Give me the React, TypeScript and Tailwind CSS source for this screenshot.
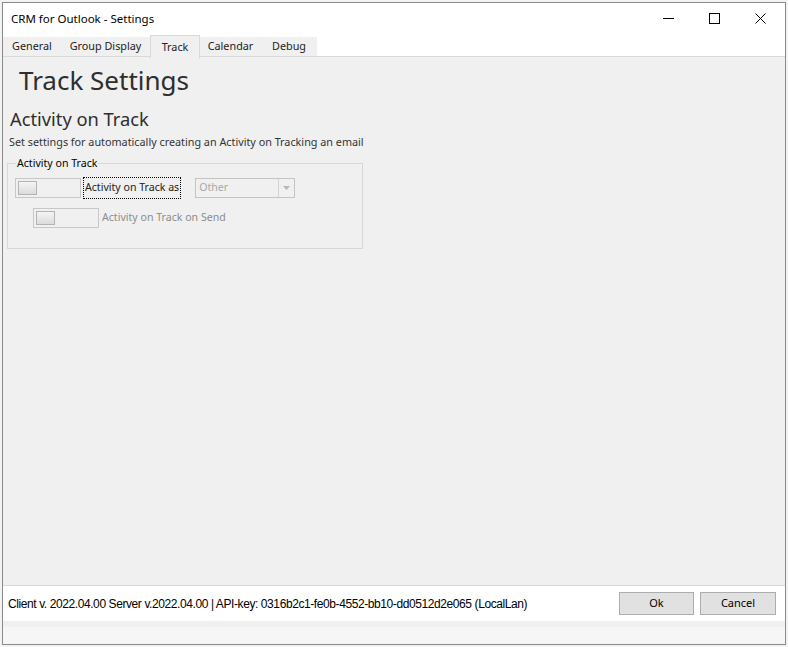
import React from 'react';

const tabs = [
  { label: 'General', w: 'w-[58px]' },
  { label: 'Group Display', w: 'w-[89px]' },
  { label: 'Track', w: 'w-[50px]' },
  { label: 'Calendar', w: 'w-[61px]' },
  { label: 'Debug', w: 'w-[56px]' },
];

const Toggle: React.FC<{ className?: string }> = ({ className = '' }) => (
  <div className={`w-[66px] h-[20px] border border-[#c8c8c8] bg-[#f0f0f0] flex items-center px-[2px] ${className}`}>
    <div className="w-[19px] h-[14px] border border-[#b4b4b4] bg-gradient-to-b from-[#f4f4f4] to-[#dcdcdc]" />
  </div>
);

const App: React.FC = () => {
  return (
    <div className="w-[788px] h-[647px] bg-[#f3f3f3] relative overflow-hidden font-['Segoe_UI','Noto_Sans',sans-serif] text-[10.6px] text-black">
      <div className="ml-[2px] mt-[2px] w-[784px] h-[643px] border border-[#8a8a8a] bg-white flex flex-col">
        {/* Title bar */}
        <div className="h-[31px] flex items-center justify-between">
          <span className="pl-[8px] text-[11.5px]">CRM for Outlook - Settings</span>
          <div className="flex h-full items-center">
            <div className="w-[46px] flex justify-center">
              <div className="w-[11px] h-[1px] bg-black" />
            </div>
            <div className="w-[46px] flex justify-center">
              <div className="w-[11px] h-[11px] border border-black" />
            </div>
            <div className="w-[46px] flex justify-center mr-[2px]">
              <svg width="11" height="11" viewBox="0 0 11 11">
                <path d="M0.5 0.5L10.5 10.5M10.5 0.5L0.5 10.5" stroke="black" strokeWidth="1" />
              </svg>
            </div>
          </div>
        </div>

        {/* Tabs */}
        <div className="h-[23px] flex items-end relative text-[10.8px] text-[#222]">
          <div className="flex items-end h-full">
            {tabs.map((t) =>
              t.label === 'Track' ? (
                <div
                  key={t.label}
                  className={`${t.w} h-[23px] border border-b-0 border-[#d9d9d9] bg-[#f0f0f0] flex items-center justify-center relative z-10 -mb-[1px]`}
                >
                  {t.label}
                </div>
              ) : (
                <div
                  key={t.label}
                  className={`${t.w} h-[20px] bg-[#f0f0f0] flex items-center justify-center border-b border-[#d9d9d9]`}
                >
                  {t.label}
                </div>
              )
            )}
          </div>
          <div className="flex-1 border-b border-[#d9d9d9] h-full" />
        </div>

        {/* Content */}
        <div className="h-[529px] bg-[#f0f0f0] border-b border-[#d9d9d9] text-[#222]">
          <h1 className="pl-[16px] pt-[6px] text-[26px] leading-[34px] text-[#2e2e2e] font-normal">Track Settings</h1>
          <h2 className="pl-[7px] pt-[10px] text-[18.3px] leading-[24px] text-[#2e2e2e]">Activity on Track</h2>
          <p className="pl-[6px] pt-[3px] text-[10.8px] leading-[16px] text-[#333]">
            Set settings for automatically creating an Activity on Tracking an email
          </p>
          <fieldset className="ml-[4px] mt-[6px] w-[356px] h-[93px] border border-[#d7d7d7] px-[7px]">
            <legend className="ml-[1px] px-[1px] text-black leading-[14px]">Activity on Track</legend>
            <div className="flex items-center mt-[7px]">
              <Toggle />
              <span className="ml-[2px] border border-dotted border-black px-[1px] h-[22px] flex items-center">
                Activity on Track as
              </span>
              <div className="ml-[14px] w-[100px] h-[20px] border border-[#c4c4c4] flex items-center">
                <span className="flex-1 pl-[3px] text-[#a8a8a8]">Other</span>
                <div className="w-[16px] h-full border-l border-[#d4d4d4] flex items-center justify-center">
                  <svg width="7" height="4" viewBox="0 0 7 4">
                    <path d="M0 0H7L3.5 4Z" fill="#b8b8b8" />
                  </svg>
                </div>
              </div>
            </div>
            <div className="flex items-center mt-[9px] ml-[18px]">
              <Toggle />
              <span className="ml-[3px] text-[#8c8c8c]">Activity on Track on Send</span>
            </div>
          </fieldset>
        </div>

        {/* Footer */}
        <div className="h-[35px] bg-white flex items-center justify-between pl-[5px] pr-[9px]">
          <span className="font-['Liberation_Sans_Narrow','Liberation_Sans',sans-serif] text-[12px] tracking-[-0.41px] text-black">
            Client v. 2022.04.00 Server v.2022.04.00 | API-key: 0316b2c1-fe0b-4552-bb10-dd0512d2e065 (LocalLan)
          </span>
          <div className="flex gap-[6px] text-[11px]">
            <button className="w-[75px] h-[23px] border border-[#adadad] bg-[#e1e1e1]">Ok</button>
            <button className="w-[76px] h-[23px] border border-[#adadad] bg-[#e1e1e1]">Cancel</button>
          </div>
        </div>
        <div className="h-[6px] bg-[#f0f0f0]" />
        <div className="flex-1 bg-[#f6f6f6]" />
      </div>
    </div>
  );
};

export default App;
